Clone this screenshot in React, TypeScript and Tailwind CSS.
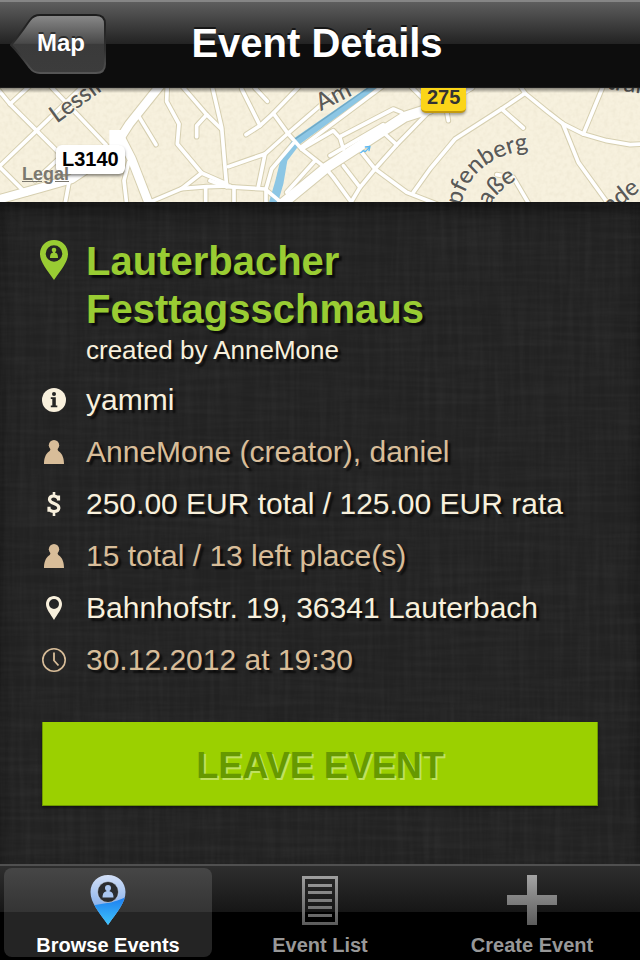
import React from 'react';

const MINOR_ROADS = [
  'M-10 255 L110 140 L250 5',
  'M-15 5 L30 60 L110 140 L175 205',
  'M30 60 L90 5',
  'M0 250 L80 330',
  'M150 5 L318 182',
  'M175 225 L105 290',
  'M415 95 L468 182',
  'M502 5 L500 52 L537 120 L532 180 L605 267 L680 300',
  'M545 5 L620 92 L664 135',
  'M620 92 L590 125 L590 158',
  'M636 5 L665 130 L680 308',
  'M455 352 L545 314 L605 267',
  'M545 314 L620 308 L690 306',
  'M617 310 L617 360',
  'M386 235 L372 290 L380 360',
  'M207 295 L195 360',
  'M725 15 L780 125 L738 152',
  'M780 125 L820 88 L900 5',
  'M765 12 L802 52',
  'M820 88 L865 150 L905 195 L975 250 L1000 280 L1058 360',
  'M685 248 L795 210 L775 308',
  'M795 210 L865 147 L1010 22',
  'M630 290 L680 308 L795 315 L840 352',
  'M702 310 L702 360',
  'M798 360 L798 315 L815 255 L880 178',
  'M905 188 L1150 5',
  'M945 230 L860 325',
  'M905 195 L1000 140 L1020 162 L1030 195',
  'M1020 158 L1180 75 L1205 85',
  'M990 215 L1150 122',
  'M1030 245 L1080 310',
  'M1085 205 L1125 255 L1220 325 L1310 360',
  'M1050 360 L1080 310 L1125 255 L1190 182 L1285 85',
  'M1155 150 L1190 182',
  'M1240 325 L1290 255 L1365 165 L1505 75 L1575 28',
  'M1230 5 L1285 60',
  'M1560 5 L1575 28 L1645 85 L1690 120 L1750 150 L1820 170 L1890 182 L1930 180',
  'M1505 75 L1570 132',
  'M1810 5 L1750 150',
  'M1688 118 L1735 235 L1825 360',
  'M1340 80 L1345 110',
  'M1490 272 L1540 280 L1590 365',
];

const MAIN_ROADS = [
  'M-10 348 L120 312 L215 285 L290 235 L345 185',
  'M350 160 L355 172 L388 120 L480 5',
  'M362 160 L395 225 L448 362',
];

const HIGHWAYS = ['M840 365 L980 250 L1150 140 L1215 98 L1290 74 L1410 5'];

function StreetMap() {
  return (
    <svg
      className="block h-full w-full"
      viewBox="0 12 1920 342"
      preserveAspectRatio="xMidYMid slice"
      aria-hidden="true"
      fill="none"
      strokeLinecap="round"
      strokeLinejoin="round"
    >
      <defs>
        <filter id="paper" x="0" y="0" width="100%" height="100%">
          <feTurbulence type="fractalNoise" baseFrequency="0.08" numOctaves="2" seed="4" />
          <feColorMatrix values="0 0 0 0 0.72  0 0 0 0 0.66  0 0 0 0 0.5  0.5 0 0 0 -0.19" />
        </filter>
        <path id="arc" d="M1382 366 C1400 290 1450 200 1640 192" />
        <path id="arc2" d="M1470 368 Q1490 318 1570 275" />
      </defs>
      <rect x="0" y="0" width="1920" height="366" fill="#f7f1de" />
      <rect x="0" y="0" width="1920" height="366" filter="url(#paper)" />
      <g stroke="#d6cfb0">
        {MINOR_ROADS.map((d) => (
          <path key={d} d={d} strokeWidth="17" />
        ))}
        {MAIN_ROADS.map((d) => (
          <path key={d} d={d} strokeWidth="31" />
        ))}
        {HIGHWAYS.map((d) => (
          <path key={d} d={d} strokeWidth="36" />
        ))}
      </g>
      <path
        d="M1100 12 L880 164 L842 225 L826 290 L805 362 L832 362 L850 300 L862 230 L900 180 L1130 12 Z"
        fill="#8cc6e4"
      />
      <path d="M1104 12 L884 166 L848 222" stroke="#6fa9c6" strokeWidth="4" />
      <g stroke="#ffffff">
        {MINOR_ROADS.map((d) => (
          <path key={d} d={d} strokeWidth="11" />
        ))}
        {MAIN_ROADS.map((d) => (
          <path key={d} d={d} strokeWidth="25" />
        ))}
        {HIGHWAYS.map((d) => (
          <path key={d} d={d} strokeWidth="30" />
        ))}
      </g>
      <path d="M328 138H372V184H328Z" fill="#ffffff" />
      <path
        d="M1082 206 L1090 200 L1096 203 L1108 190 M1096 189 L1110 187 L1107 200"
        stroke="#5cb8f2"
        strokeWidth="4"
      />
      <g
        fill="#5a5a58"
        stroke="#f9f4e4"
        strokeWidth="6"
        paintOrder="stroke"
        fontFamily="Lato, 'Open Sans', sans-serif"
        className="text-[72px] font-medium"
      >
        <text transform="translate(170 119) rotate(-36)">Lessin</text>
        <text transform="translate(962 82) rotate(-27)">Am</text>
        <text transform="translate(1818 14) rotate(8)">traße</text>
        <text transform="translate(1828 392) rotate(-38)">nde</text>
        <text>
          <textPath href="#arc">pfenberg</textPath>
        </text>
        <text>
          <textPath href="#arc2">aße</textPath>
        </text>
      </g>
    </svg>
  );
}

function Fabric() {
  return (
    <svg className="absolute inset-0 -z-10 h-full w-full" aria-hidden="true">
      <filter id="weft" x="0" y="0" width="100%" height="100%">
        <feTurbulence type="fractalNoise" baseFrequency="0.012 0.2" numOctaves="2" seed="7" />
        <feColorMatrix values="0 0 0 0 1  0 0 0 0 1  0 0 0 0 1  0.05 0 0 0 -0.018" />
      </filter>
      <filter id="warp" x="0" y="0" width="100%" height="100%">
        <feTurbulence type="fractalNoise" baseFrequency="0.2 0.012" numOctaves="2" seed="3" />
        <feColorMatrix values="0 0 0 0 1  0 0 0 0 1  0 0 0 0 1  0.05 0 0 0 -0.018" />
      </filter>
      <rect width="100%" height="100%" filter="url(#weft)" />
      <rect width="100%" height="100%" filter="url(#warp)" />
    </svg>
  );
}

function PersonPin() {
  return (
    <svg width="28" height="40" viewBox="0 0 28 40" aria-hidden="true">
      <path
        fill="#99cc33"
        fillRule="evenodd"
        d="M14 0C6 0 0 6 0 14c0 8 7 16 14 26 7-10 14-18 14-26C28 6 22 0 14 0Zm0 5.200a8.300 8.300 0 1 1 0 16.600a8.300 8.300 0 1 1 0-16.600Z"
      />
      <circle cx="14" cy="10" r="2.300" fill="#99cc33" />
      <path fill="#99cc33" d="M13 11h2v1.500c2 .5 3 2 3 5.500h-8c0-3.500 1-5 3-5.500Z" />
    </svg>
  );
}

function InfoIcon() {
  return (
    <svg width="24" height="24" viewBox="0 0 24 24" aria-hidden="true">
      <circle cx="12" cy="12" r="12" fill="#f8f0dc" />
      <circle cx="12" cy="6" r="2" fill="#242424" />
      <path fill="#242424" d="M8.800 9.200h5v8.200h1.500V19.200H8.800v-1.800h1.500V11H8.800Z" />
    </svg>
  );
}

function PersonIcon() {
  return (
    <svg width="20" height="24" viewBox="0 0 20 24" aria-hidden="true">
      <circle cx="10" cy="5.200" r="5.200" fill="#d8bd99" />
      <path fill="#d8bd99" d="M6.500 8.500h7c0 1.500.5 2.300 1.500 3C18.500 14 20 18.500 20 24H0C0 18.500 1.500 14 5 11.500c1-.7 1.500-1.500 1.500-3Z" />
    </svg>
  );
}

function DollarIcon() {
  return (
    <svg width="14" height="24" viewBox="0 0 14 24" aria-hidden="true" fill="none" stroke="#f8f0dc">
      <path strokeWidth="2.600" d="M7 0v4M7 19v5" />
      <path
        strokeWidth="3.200"
        d="M11.500 8.500V3.500M11.500 6.500C10 4.600 8.500 4 6.800 4 4 4 2.500 5.500 2.500 7.500c0 4.600 9.300 3.600 9.300 8.200 0 2.400-2 3.800-4.800 3.800-2.200 0-3.900-.7-4.900-2.500M2 14.800v5"
      />
    </svg>
  );
}

function PlaceIcon() {
  return (
    <svg width="16" height="24" viewBox="0 0 16 24" aria-hidden="true">
      <path
        fill="#f8f0dc"
        fillRule="evenodd"
        d="M8 0C3.300 0 0 3.600 0 8c0 5 4.500 10 8 16 3.500-6 8-11 8-16 0-4.400-3.300-8-8-8Zm0 3a5 5 0 1 1 0 10A5 5 0 1 1 8 3Z"
      />
    </svg>
  );
}

function ClockIcon() {
  return (
    <svg width="24" height="24" viewBox="0 0 24 24" aria-hidden="true" fill="none" stroke="#d8bd99">
      <circle cx="12" cy="12" r="11.200" strokeWidth="1.600" />
      <path strokeWidth="1.800" d="M12 4.500V12.500L16.500 17.500" />
    </svg>
  );
}

function BrowseIcon() {
  return (
    <svg width="36" height="50" viewBox="0 0 36 50" aria-hidden="true">
      <defs>
        <linearGradient id="pinTop" x1="0" y1="0" x2="0" y2="1">
          <stop offset="0" stopColor="#d3e0f7" />
          <stop offset="0.600" stopColor="#8db4ec" />
        </linearGradient>
        <linearGradient id="pinLow" x1="0" y1="0" x2="0" y2="1">
          <stop offset="0" stopColor="#1c7df0" />
          <stop offset="1" stopColor="#3fc4fb" />
        </linearGradient>
        <clipPath id="pinShape">
          <path d="M18 0C8 0 0.500 7 0.500 17 0.500 28 9 37 18 50 27 37 35.500 28 35.500 17 35.500 7 28 0 18 0Z" />
        </clipPath>
      </defs>
      <g clipPath="url(#pinShape)">
        <rect width="36" height="50" fill="url(#pinTop)" />
        <path d="M0 31C10 29 24 28 36 22V50H0Z" fill="url(#pinLow)" />
      </g>
      <circle cx="18" cy="17" r="10.500" fill="#2b2d30" stroke="#d3e0f7" strokeWidth="0.600" />
      <circle cx="18" cy="13" r="3" fill="#aac6f0" />
      <path fill="#aac6f0" d="M16.500 14h3v2.200c3 .6 4 2.800 4 6.300h-11c0-3.500 1-5.700 4-6.300Z" />
    </svg>
  );
}

function ListIcon() {
  return (
    <svg width="36" height="50" viewBox="0 0 36 50" aria-hidden="true">
      <defs>
        <linearGradient id="greyList" gradientUnits="userSpaceOnUse" x1="0" y1="0" x2="0" y2="50">
          <stop offset="0" stopColor="#a0a0a0" />
          <stop offset="1" stopColor="#5c5c5c" />
        </linearGradient>
      </defs>
      <path
        fill="url(#greyList)"
        fillRule="evenodd"
        d="M0 1H36V50H0ZM3 4V47H33V4ZM6 9H30V12H6ZM6 16H30V19H6ZM6 24H30V27H6ZM6 31H30V34H6ZM6 39H30V42H6Z"
      />
    </svg>
  );
}

function PlusIcon() {
  return (
    <svg width="50" height="50" viewBox="0 0 50 50" aria-hidden="true">
      <defs>
        <linearGradient id="greyPlus" x1="0" y1="0" x2="0" y2="1">
          <stop offset="0" stopColor="#a4a4a4" />
          <stop offset="1" stopColor="#5c5c5c" />
        </linearGradient>
      </defs>
      <path fill="url(#greyPlus)" d="M20 0h10v20h20v10H30v20H20V30H0V20h20Z" />
    </svg>
  );
}

const DETAILS = [
  { icon: <InfoIcon />, text: 'yammi', color: 'text-[#f8f0dc]' },
  { icon: <PersonIcon />, text: 'AnneMone (creator), daniel', color: 'text-[#d8bd99]' },
  { icon: <DollarIcon />, text: '250.00 EUR total / 125.00 EUR rata', color: 'text-[#f8f0dc]' },
  { icon: <PersonIcon />, text: '15 total / 13 left place(s)', color: 'text-[#d8bd99]' },
  { icon: <PlaceIcon />, text: 'Bahnhofstr. 19, 36341 Lauterbach', color: 'text-[#f8f0dc]' },
  { icon: <ClockIcon />, text: '30.12.2012 at 19:30', color: 'text-[#d8bd99]' },
];

const TABS = [
  { icon: <BrowseIcon />, label: 'Browse Events', active: true },
  { icon: <ListIcon />, label: 'Event List', active: false },
  { icon: <PlusIcon />, label: 'Create Event', active: false },
];

export default function App() {
  return (
    <div className="flex min-h-screen flex-col bg-[#242424] font-['Liberation_Sans',Arial,sans-serif]">
      <header className="grid h-[88px] grid-cols-[1fr_auto_1fr] items-center border-t-2 border-b border-t-[#868686] border-b-[#1c1c1c] bg-[linear-gradient(#5e5e5e_0,#222222_42px,#0d0d0d_42px,#0d0d0d_100%)] pr-4 pb-px pl-[10px]">
        <button
          type="button"
          className="relative isolate flex h-[60px] w-24 items-center justify-center pb-0.5 pl-[6px] text-2xl font-bold text-white [text-shadow:0_-2px_0_rgba(0,0,0,0.5)]"
        >
          <svg className="absolute inset-0 -z-10" width="96" height="60" viewBox="0 0 96 60" aria-hidden="true">
            <defs>
              <linearGradient id="back" x1="0" y1="0" x2="0" y2="1">
                <stop offset="0" stopColor="#8a8a8a" />
                <stop offset="0.490" stopColor="#484848" />
                <stop offset="0.500" stopColor="#3a3a3a" />
                <stop offset="1" stopColor="#3c3c3c" />
              </linearGradient>
              <linearGradient id="backEdge" x1="0" y1="0" x2="0" y2="1">
                <stop offset="0" stopColor="#1d1d1d" />
                <stop offset="0.600" stopColor="#303030" />
                <stop offset="1" stopColor="#555555" />
              </linearGradient>
            </defs>
            <path
              d="M1 31C9 22 14 14 20 6C23 2 26 1 30 1H86Q95 1 95 10V50Q95 59 86 59H30C26 59 23 58 20 54C14 46 9 39 1 31Z"
              fill="url(#back)"
              stroke="url(#backEdge)"
              strokeWidth="2"
            />
          </svg>
          Map
        </button>
        <h1 className="pb-0.5 text-[40px] leading-[48px] font-bold text-white [text-shadow:0_-2px_0_rgba(0,0,0,0.6)]">
          Event Details
        </h1>
      </header>

      <section aria-label="Map" className="relative h-[114px] overflow-hidden">
        <StreetMap />
        <div className="absolute inset-x-0 top-0 h-[5px] bg-linear-to-b from-black/45 to-transparent" />
        <span className="absolute -top-[5px] left-[421px] rounded-[5px] border-b-2 border-[#c39a10] bg-[#fbd518] px-[6px] text-xl leading-[28px] font-bold text-[#333] shadow-[0_2px_3px_rgba(0,0,0,0.35)]">
          275
        </span>
        <span className="absolute top-[57px] left-[56px] rounded-md bg-white px-[6px] text-xl leading-[29px] font-bold text-black shadow-[0_2px_3px_rgba(0,0,0,0.45)]">
          L3140
        </span>
        <a
          href="#legal"
          className="absolute top-[75px] left-[22px] text-lg leading-[22px] font-bold text-[#7b786f] underline"
        >
          Legal
        </a>
      </section>

      <main className="relative isolate flex-1 bg-[#222222] px-[42px] pt-[35px] pb-14 shadow-[inset_0_10px_20px_-4px_rgba(0,0,0,0.6)]">
        <Fabric />
        <div className="flex gap-5 [text-shadow:3px_3px_2px_rgba(0,0,0,0.7)]">
          <div className="flex w-6 shrink-0 justify-center pt-[3px]">
            <div className="shrink-0">
              <PersonPin />
            </div>
          </div>
          <div>
            <h2 className="max-w-[400px] text-[40px] leading-[48px] font-bold text-[#99cc33]">
              Lauterbacher Festtagsschmaus
            </h2>
            <p className="text-[26px] leading-[34px] text-[#f8f0dc]">created by AnneMone</p>
          </div>
        </div>
        <ul className="mt-[7px] text-[30px] leading-[52px] [text-shadow:3px_3px_2px_rgba(0,0,0,0.7)]">
          {DETAILS.map((row) => (
            <li key={row.text} className={`flex gap-5 ${row.color}`}>
              <span className="flex h-[52px] w-6 shrink-0 items-center justify-center">{row.icon}</span>
              <span>{row.text}</span>
            </li>
          ))}
        </ul>
        <button
          type="button"
          className="mt-9 block h-[84px] w-full border-r border-b border-l border-[#6f9a00] bg-[#9bd000] pt-1 text-4xl font-bold text-[#669900] shadow-[0_2px_3px_rgba(0,0,0,0.5)] [text-shadow:2px_2px_0_rgba(255,255,255,0.4)]"
        >
          LEAVE EVENT
        </button>
      </main>

      <nav className="grid h-24 grid-cols-3 gap-1 border-t-2 border-[#505050] bg-[linear-gradient(#2e2e2e_0,#161616_46px,#000_46px)] px-1 pt-0.5 pb-1 shadow-[0_-2px_4px_rgba(0,0,0,0.4)]">
        {TABS.map((tab) => (
          <button
            key={tab.label}
            type="button"
            className={`flex flex-col items-center rounded-lg pt-[7px] text-xl leading-6 font-bold ${
              tab.active
                ? 'bg-[linear-gradient(#464646_0,#343434_44px,#242424_44px)] text-white'
                : 'text-[#989898]'
            }`}
          >
            {tab.icon}
            <span className="mt-2">{tab.label}</span>
          </button>
        ))}
      </nav>
    </div>
  );
}
